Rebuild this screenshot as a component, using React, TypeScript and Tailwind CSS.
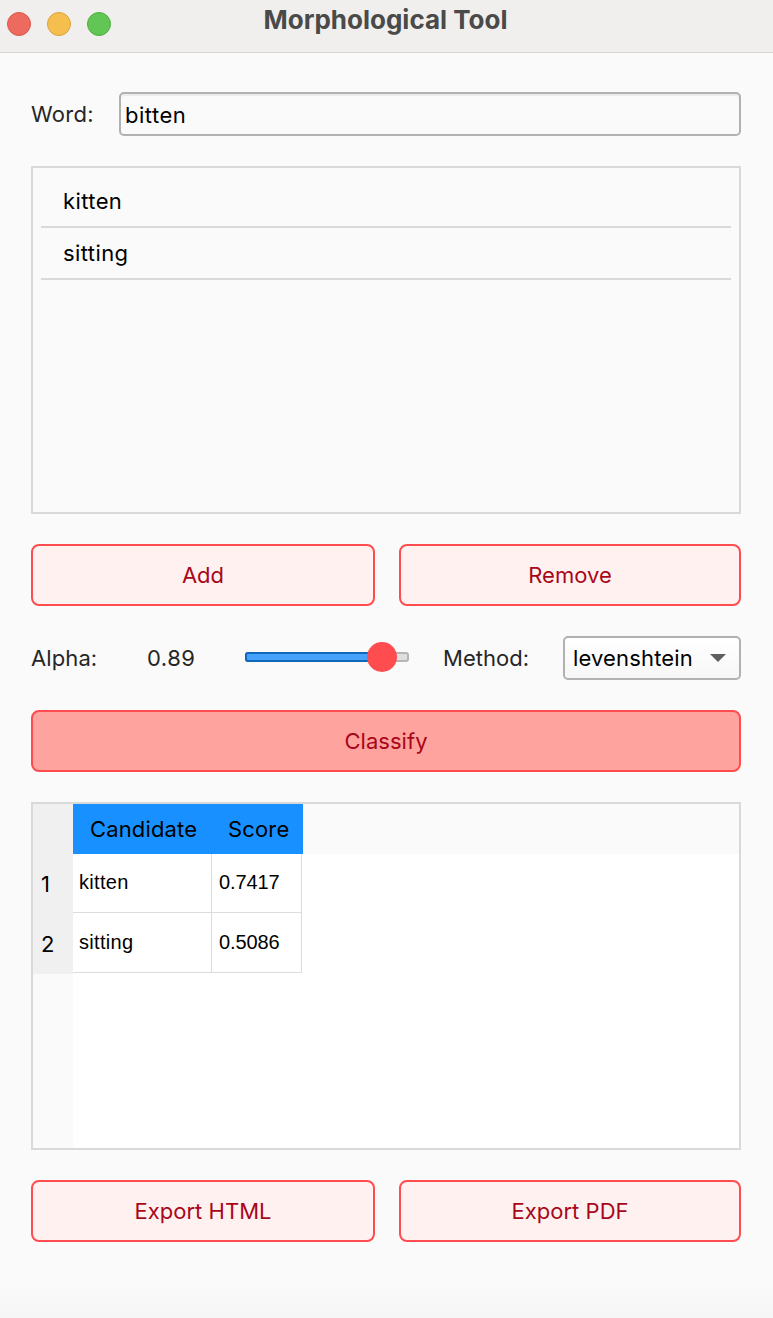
import { useState } from "react";

const words = ["kitten", "sitting"];
const results = [
  { candidate: "kitten", score: "0.7417" },
  { candidate: "sitting", score: "0.5086" },
];

function ActionButton({ label, className = "bg-[#fff1f0]" }: { label: string; className?: string }) {
  return (
    <button
      className={`flex h-[62px] w-full items-center justify-center rounded-lg border-2 border-[#ff4d4f] text-[#a8071a] tracking-[0.04px] ${className}`}
    >
      {label}
    </button>
  );
}

function TitleBar() {
  return (
    <header className="grid h-[53px] shrink-0 grid-cols-[1fr_auto_1fr] border-b border-[#d5d4d2] bg-[#f0efed]">
      <div className="flex gap-4 pt-3 pl-[7px]">
        <span className="size-6 rounded-full border border-[#d9574c] bg-[#ed6a5f]" />
        <span className="size-6 rounded-full border border-[#dba33e] bg-[#f5bf4f]" />
        <span className="size-6 rounded-full border border-[#4fae3c] bg-[#62c655]" />
      </div>
      <h1 className="-ml-0.5 pt-1 text-[26px] leading-8 font-bold text-[#4a4a4a]">Morphological Tool</h1>
    </header>
  );
}

export default function App() {
  const [word, setWord] = useState("bitten");

  return (
    <div className="flex h-[1318px] w-[773px] flex-col overflow-hidden bg-[linear-gradient(#fafafa_1285px,#f6f6f6_1318px)] font-['Inter',sans-serif] text-[22px] leading-[30px] text-black">
      <TitleBar />
      <main className="flex flex-col pt-[39px] pr-8 pl-[31px]">
        <label className="flex h-11 items-center">
          <span className="w-[88px] tracking-[0.3px] text-[#262626]">Word:</span>
          <input
            value={word}
            onChange={(e) => setWord(e.target.value)}
            className="h-11 w-[622px] rounded-[5px] border-2 border-[#b1b1b1] bg-transparent pt-0.5 pl-1 tracking-[0.5px] shadow-[inset_0_2px_0_#ebebeb] outline-none"
          />
        </label>

        <ul className="mt-[30px] h-[348px] border-2 border-[#d9d9d9] px-2 pt-2">
          {words.map((w) => (
            <li key={w} className="flex h-[52px] items-center border-b-2 border-[#d9d9d9] pl-[22px] tracking-[0.4px]">
              {w}
            </li>
          ))}
        </ul>

        <div className="mt-[30px] grid grid-cols-[344px_342px] gap-6">
          <ActionButton label="Add" />
          <ActionButton label="Remove" />
        </div>

        <div className="mt-[30px] flex h-11 items-center text-[#262626]">
          <span className="w-[116px] tracking-[0.1px]">Alpha:</span>
          <span className="w-[98px] tracking-[0.5px]">0.89</span>
          <div className="relative -mt-0.5 h-2.5 w-[164px] rounded-[3px] border-2 border-[#b5b5b5] bg-[#dedede]">
            <div className="absolute -top-0.5 -left-0.5 h-2.5 w-[137px] rounded-[3px] border-2 border-[#1166b8] bg-[#45a1fb]" />
            <div className="absolute -top-3 left-[120px] size-[30px] rounded-full bg-[#ff4d4f]" />
          </div>
          <span className="ml-[34px] w-[120px] tracking-[0.05px]">Method:</span>
          <button className="flex h-11 w-[178px] items-center justify-between rounded-[5px] border-2 border-[#b1b1b1] bg-linear-to-b from-white to-[#f7f7f7] pr-[13px] pl-2 tracking-[0.15px] text-black">
            levenshtein
            <svg width="16" height="8" viewBox="0 0 16 8" fill="#5f5f5f">
              <path d="M0 0H16L8 8Z" />
            </svg>
          </button>
        </div>

        <div className="mt-[30px]">
          <ActionButton label="Classify" className="bg-[#ffa39e]" />
        </div>

        <div className="mt-[30px] flex h-[348px] border-2 border-[#d9d9d9] bg-white">
          <div className="w-10 bg-[#fafafa]">
            <div className="h-[170px] bg-[#f0f0f0] pt-[50px]">
              {results.map((r, i) => (
                <div key={r.candidate} className="flex h-[60px] items-center pl-2">
                  {i + 1}
                </div>
              ))}
            </div>
          </div>
          <div className="flex-1">
            <div className="flex h-[50px] bg-[#fafafa] tracking-[0.15px]">
              <div className="flex w-[139px] items-center bg-[#1890ff] pl-[17px]">Candidate</div>
              <div className="flex w-[91px] items-center bg-[#1890ff] pl-4">Score</div>
            </div>
            <div className="font-['Liberation_Sans',sans-serif] text-[20px]">
              {results.map((r, i) => (
                <div key={r.candidate} className={i === 0 ? "flex h-[59px]" : "flex h-[60px]"}>
                  <div className="flex w-[139px] items-center border-r border-b border-[#dcdcdc] pb-0.5 pl-1.5 tracking-[0.3px]">
                    {r.candidate}
                  </div>
                  <div className="flex w-[90px] items-center border-r border-b border-[#dcdcdc] pb-0.5 pl-[7px] tracking-[-0.1px]">
                    {r.score}
                  </div>
                </div>
              ))}
            </div>
          </div>
        </div>

        <div className="mt-[30px] grid grid-cols-[344px_342px] gap-6">
          <ActionButton label="Export HTML" />
          <ActionButton label="Export PDF" />
        </div>
      </main>
    </div>
  );
}
